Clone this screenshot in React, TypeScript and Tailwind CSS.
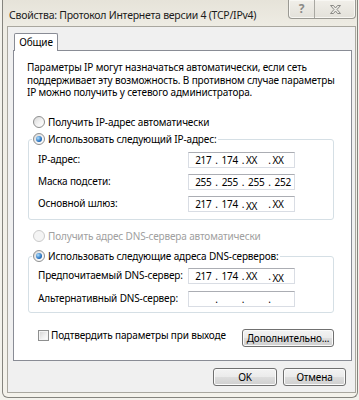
import { Fragment, type ReactNode } from "react";
import clsx from "clsx";

function Radio({ checked = false, disabled = false }: { checked?: boolean; disabled?: boolean }) {
  return (
    <span
      className={clsx(
        "w-[12px] h-[12px] rounded-full border flex items-center justify-center shrink-0",
        disabled
          ? "border-[#cbcbcb] bg-[#f4f4f4]"
          : "border-[#8e8f8f] bg-[linear-gradient(135deg,#d6d6d6,#f3f3f3_55%,#ffffff)]"
      )}
    >
      {checked && (
        <span className="w-[6px] h-[6px] rounded-full bg-[radial-gradient(circle_at_35%_35%,#aee0ff,#2a73c0_60%,#1b4f8a)]" />
      )}
    </span>
  );
}

function Checkbox() {
  return (
    <span className="w-[11px] h-[11px] border border-[#8e8f8f] bg-[linear-gradient(135deg,#d2d2d2,#f1f1f1_60%,#ffffff)] shadow-[inset_0_0_0_1px_#f4f4f4] shrink-0" />
  );
}

function WinButton({ children, className }: { children: ReactNode; className?: string }) {
  return (
    <div
      className={clsx(
        "h-[18px] border border-[#707070] rounded-[3px] flex items-center justify-center leading-none whitespace-nowrap bg-[linear-gradient(#f3f3f3,#ebebeb_48%,#dddddd_52%,#cfcfcf)] shadow-[inset_0_0_0_1px_#fbfbfb]",
        className
      )}
    >
      {children}
    </div>
  );
}

// IP edit box: four segments separated by dots, "XX" ones are left aligned like the pasted parts
function IpField({ parts, low }: { parts: string[]; low?: number }) {
  return (
    <div className="w-[107px] h-[16px] bg-white border border-[#d9dde4] border-t-[#abadb3] flex items-center pl-[3px] text-[10px] leading-none tracking-[-0.3px]">
      {parts.map((p, i) => (
        <Fragment key={i}>
          {i > 0 && <span className="w-[4px] text-center">.</span>}
          <span
            className={clsx(
              "w-[23px]",
              p === "XX" ? "text-left pl-[1px]" : "text-center",
              low === i && "translate-y-[2px]"
            )}
          >
            {p}
          </span>
        </Fragment>
      ))}
    </div>
  );
}

function FieldRow({ label, children }: { label: string; children: ReactNode }) {
  return (
    <div className="h-[16px] flex items-center">
      <span className="w-[150px] whitespace-nowrap">{label}</span>
      {children}
    </div>
  );
}

export default function App() {
  return (
    <div className="w-[359px] h-[400px] overflow-hidden bg-[#f3f2ec] font-['Segoe_UI','Noto_Sans',sans-serif] text-[10px] tracking-[-0.15px] text-black">
      <div className="ml-[2px] w-[356px] h-[398px] flex flex-col border-x border-b border-[#85847e] rounded-b-[6px] bg-[linear-gradient(180deg,#e6e3d9,#efede5_30px,#f4f2eb)]">
        {/* title bar */}
        <div className="h-[26px] flex justify-between">
          <div className="pl-[6px] pt-[9px] text-[10.5px] leading-[12px] tracking-[-0.25px] text-[#1b1b1b] whitespace-nowrap">
            Свойства: Протокол Интернета версии 4 (TCP/IPv4)
          </div>
          <div className="mr-[1px] h-[19px] flex border border-t-0 border-[#9a9993] rounded-b-[4px] bg-[linear-gradient(#f1efe9,#e3e1da)] shadow-[inset_0_0_0_1px_#f8f7f3]">
            <div className="w-[26px] border-r border-[#a9a8a2] flex items-center justify-center text-[12px] font-bold text-[#8a8a86]">
              ?
            </div>
            <div className="w-[40px] flex items-center justify-center">
              <svg width="11" height="9" viewBox="0 0 11 9">
                <polygon
                  points="0.5,0.5 3.5,0.5 5.5,3 7.5,0.5 10.5,0.5 7,4.5 10.5,8.5 7.5,8.5 5.5,6 3.5,8.5 0.5,8.5 4,4.5"
                  fill="#ecebe6"
                  stroke="#8b8a86"
                  strokeWidth="1"
                />
              </svg>
            </div>
          </div>
        </div>

        {/* client area */}
        <div className="ml-[4px] mr-[1px] h-[367px] border border-[#a9a79f] bg-[#f0f0f0] flex flex-col">
          <div className="ml-[6px] mt-[6px] w-[44px] h-[18px] -mb-[1px] relative z-10 border-t border-x border-[#898c95] rounded-t-[2px] bg-white flex items-center justify-center pb-[1px]">
            Общие
          </div>

          <div className="ml-[5px] w-[339px] h-[311px] border border-[#898c95] bg-white flex flex-col">
            <p className="mt-[10px] pl-[13px] leading-[12.5px] whitespace-nowrap">
              Параметры IP могут назначаться автоматически, если сеть
              <br />
              поддерживает эту возможность. В противном случае параметры
              <br />
              IP можно получить у сетевого администратора.
            </p>

            <div className="mt-[17px] ml-[19px] h-[13px] flex items-center gap-[3px]">
              <Radio />
              <span>Получить IP-адрес автоматически</span>
            </div>

            <fieldset className="mt-[4px] ml-[14px] w-[306px] border border-[#d5dfe5] rounded-[3px]">
              <legend className="ml-[3px] pl-[1px] pr-[2px] h-[13px] flex items-center gap-[3px]">
                <Radio checked />
                <span>Использовать следующий IP-адрес:</span>
              </legend>
              <div className="pl-[9px] pt-[6px] pb-[7px] flex flex-col gap-[6px]">
                <FieldRow label="IP-адрес:">
                  <IpField parts={["217", "174", "XX", "XX"]} />
                </FieldRow>
                <FieldRow label="Маска подсети:">
                  <IpField parts={["255", "255", "255", "252"]} />
                </FieldRow>
                <FieldRow label="Основной шлюз:">
                  <IpField parts={["217", "174", "XX", "XX"]} low={2} />
                </FieldRow>
              </div>
            </fieldset>

            <div className="mt-[10px] ml-[19px] h-[13px] flex items-center gap-[3px] text-[#a0a0a0]">
              <Radio disabled />
              <span>Получить адрес DNS-сервера автоматически</span>
            </div>

            <fieldset className="mt-[7px] ml-[14px] w-[306px] border border-[#d5dfe5] rounded-[3px]">
              <legend className="ml-[3px] pl-[1px] pr-[2px] h-[13px] flex items-center gap-[3px]">
                <Radio checked />
                <span>Использовать следующие адреса DNS-серверов:</span>
              </legend>
              <div className="pl-[9px] pt-[5px] pb-[5px] flex flex-col gap-[7px]">
                <FieldRow label="Предпочитаемый DNS-сервер:">
                  <IpField parts={["217", "174", "XX", "XX"]} low={3} />
                </FieldRow>
                <FieldRow label="Альтернативный DNS-сервер:">
                  <IpField parts={["", "", "", ""]} />
                </FieldRow>
              </div>
            </fieldset>

            <div className="mt-[16px] pl-[24px] pr-[17px] flex items-start justify-between">
              <div className="h-[13px] flex items-center gap-[2px] whitespace-nowrap">
                <Checkbox />
                <span>Подтвердить параметры при выходе</span>
              </div>
              <WinButton className="w-[92px]">Дополнительно...</WinButton>
            </div>
          </div>

          <div className="mt-[7px] pr-[9px] flex justify-end gap-[6px]">
            <WinButton className="w-[64px]">OK</WinButton>
            <WinButton className="w-[63px]">Отмена</WinButton>
          </div>
        </div>
      </div>
    </div>
  );
}
